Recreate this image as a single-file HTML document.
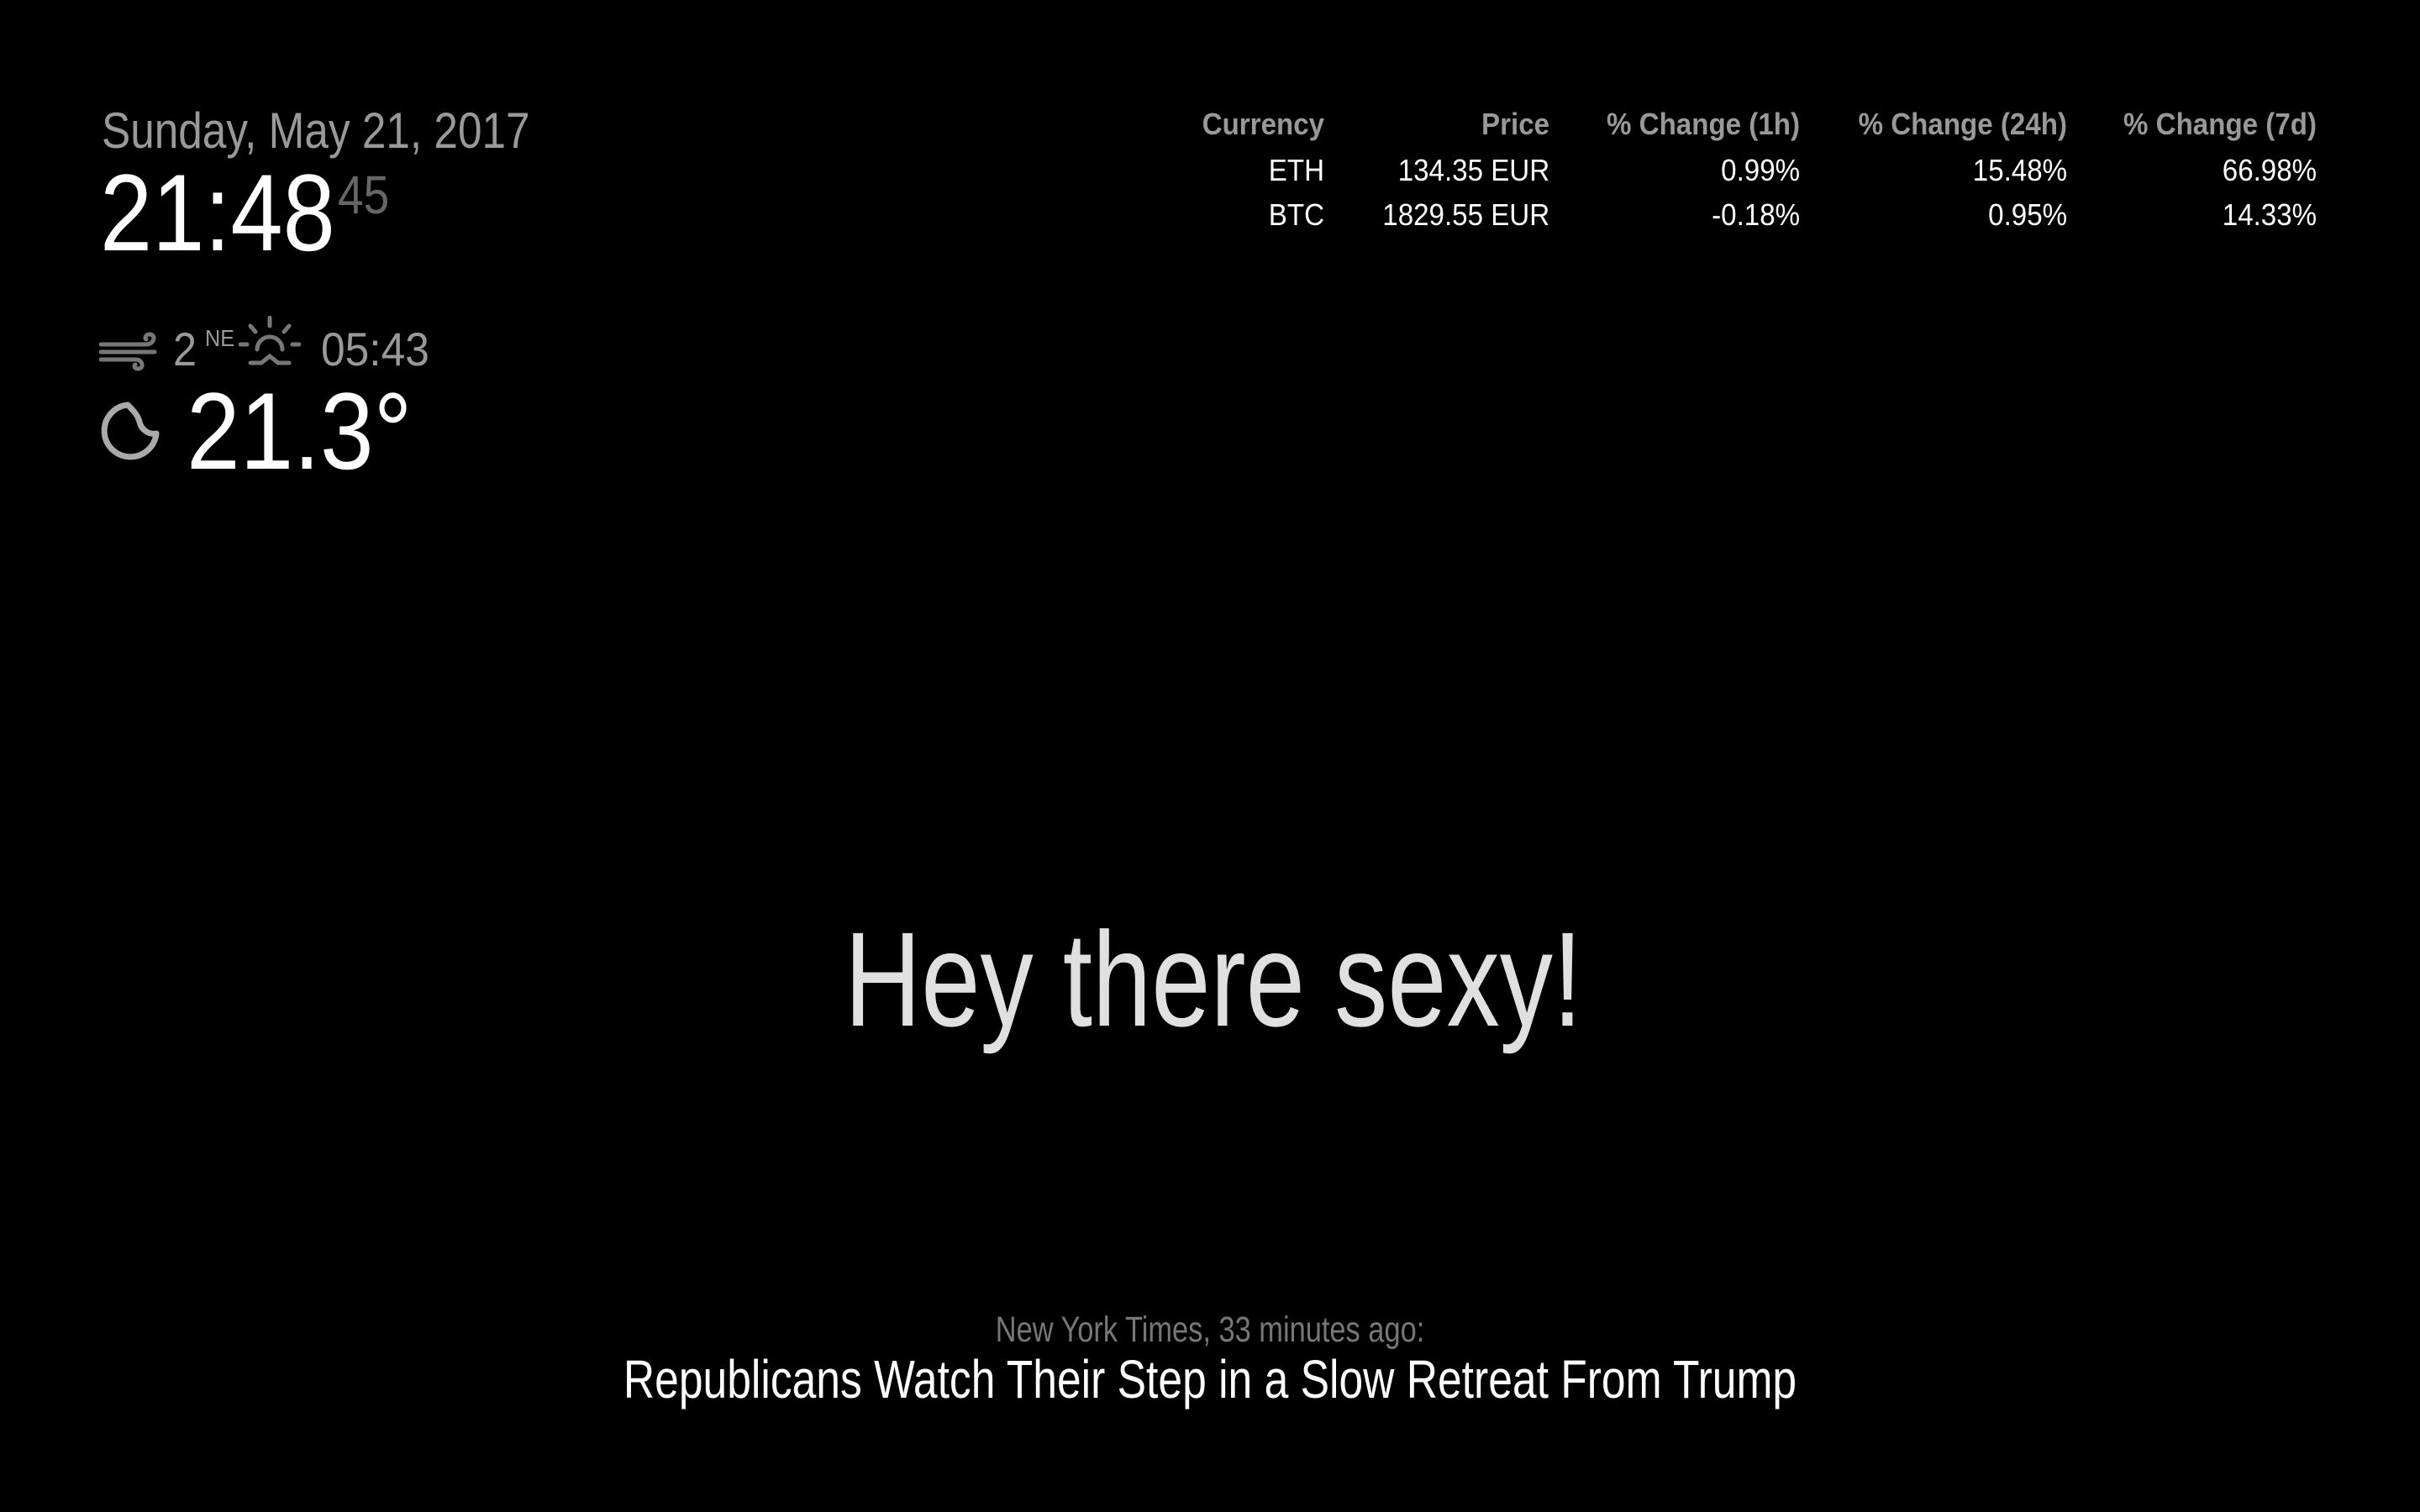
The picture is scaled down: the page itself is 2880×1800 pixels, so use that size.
<!DOCTYPE html>
<html><head><meta charset="utf-8"><style>
html,body{margin:0;padding:0;background:#000;width:2880px;height:1800px;overflow:hidden}
body{position:relative;font-family:"Liberation Sans",sans-serif;color:#fff}
.a{position:absolute;line-height:1;white-space:nowrap}
.l{transform:scaleX(.8);transform-origin:left top}
.r{transform:scaleX(.92);transform-origin:right top;text-align:right}
.c{transform:scaleX(.8);transform-origin:center top;text-align:center;left:0;width:2880px}
.h{font-weight:bold;color:#999;font-size:36px}
.v{font-size:36px;color:#fff}
</style></head><body>
<div class="a l" style="left:121px;top:126px;font-size:60px;color:#999;transform:scaleX(.855)">Sunday, May 21, 2017</div>
<div class="a l" style="left:119px;top:188px;font-size:130px;transform:scaleX(.86)">21:48</div>
<div class="a l" style="left:402px;top:200px;font-size:64px;color:#666;transform:scaleX(.86)">45</div>

<svg class="a" style="left:118px;top:394px" width="74" height="48" viewBox="0 0 74 48" fill="none" stroke="#777" stroke-width="5" stroke-linecap="round">
<path d="M2 16 H56 C66 16 68 4 60 4 C55 4 54 9 56 10"/>
<path d="M2 25 H66"/>
<path d="M2 34 H44 C52 34 54 45 46 45 C42 45 41 41 43 40"/>
</svg>
<div class="a l" style="left:206px;top:388px;font-size:56px;color:#999;transform:scaleX(.9)">2</div>
<div class="a l" style="left:244px;top:389px;font-size:28px;color:#999;transform:scaleX(.9)">NE</div>
<svg class="a" style="left:284px;top:376px" width="74" height="64" viewBox="0 0 74 64" fill="none" stroke="#777" stroke-width="5" stroke-linecap="round">
<path d="M37 2 V12"/><path d="M14 12 L20 19"/><path d="M60 12 L54 19"/>
<path d="M2 34 H10"/><path d="M64 34 H72"/>
<path d="M22 40 A15 15 0 1 1 52 40"/>
<path d="M14 56 H27 L37 48 L47 56 H60"/>
</svg>
<div class="a l" style="left:382px;top:388px;font-size:56px;color:#999;transform:scaleX(.92)">05:43</div>

<svg class="a" style="left:116px;top:476px" width="76" height="76" viewBox="0 0 76 76" fill="none" stroke="#aaa" stroke-width="7" stroke-linejoin="round">
<path d="M36 6 A31 31 0 1 0 70 40 C62 42 52 36 50 26 C48 18 42 12 36 6 Z"/>
</svg>
<div class="a l" style="left:222px;top:448px;font-size:130px;transform:scaleX(.88)">21.3°</div>

<div class="a r h" style="right:1304px;top:130px">Currency</div>
<div class="a r h" style="right:1036px;top:130px">Price</div>
<div class="a r h" style="right:738px;top:130px">% Change (1h)</div>
<div class="a r h" style="right:420px;top:130px">% Change (24h)</div>
<div class="a r h" style="right:123px;top:130px">% Change (7d)</div>
<div class="a r v" style="right:1304px;top:185px">ETH</div>
<div class="a r v" style="right:1036px;top:185px">134.35 EUR</div>
<div class="a r v" style="right:738px;top:185px">0.99%</div>
<div class="a r v" style="right:420px;top:185px">15.48%</div>
<div class="a r v" style="right:123px;top:185px">66.98%</div>
<div class="a r v" style="right:1304px;top:238px">BTC</div>
<div class="a r v" style="right:1036px;top:238px">1829.55 EUR</div>
<div class="a r v" style="right:738px;top:238px">-0.18%</div>
<div class="a r v" style="right:420px;top:238px">0.95%</div>
<div class="a r v" style="right:123px;top:238px">14.33%</div>

<div class="a c" style="top:1086px;font-size:160px;color:#e0e0e0;transform:scaleX(.79);left:4px">Hey there sexy!</div>
<div class="a c" style="top:1562px;font-size:43px;color:#777">New York Times, 33 minutes ago:</div>
<div class="a c" style="top:1610px;font-size:64px;transform:scaleX(.806)">Republicans Watch Their Step in a Slow Retreat From Trump</div>
</body></html>
